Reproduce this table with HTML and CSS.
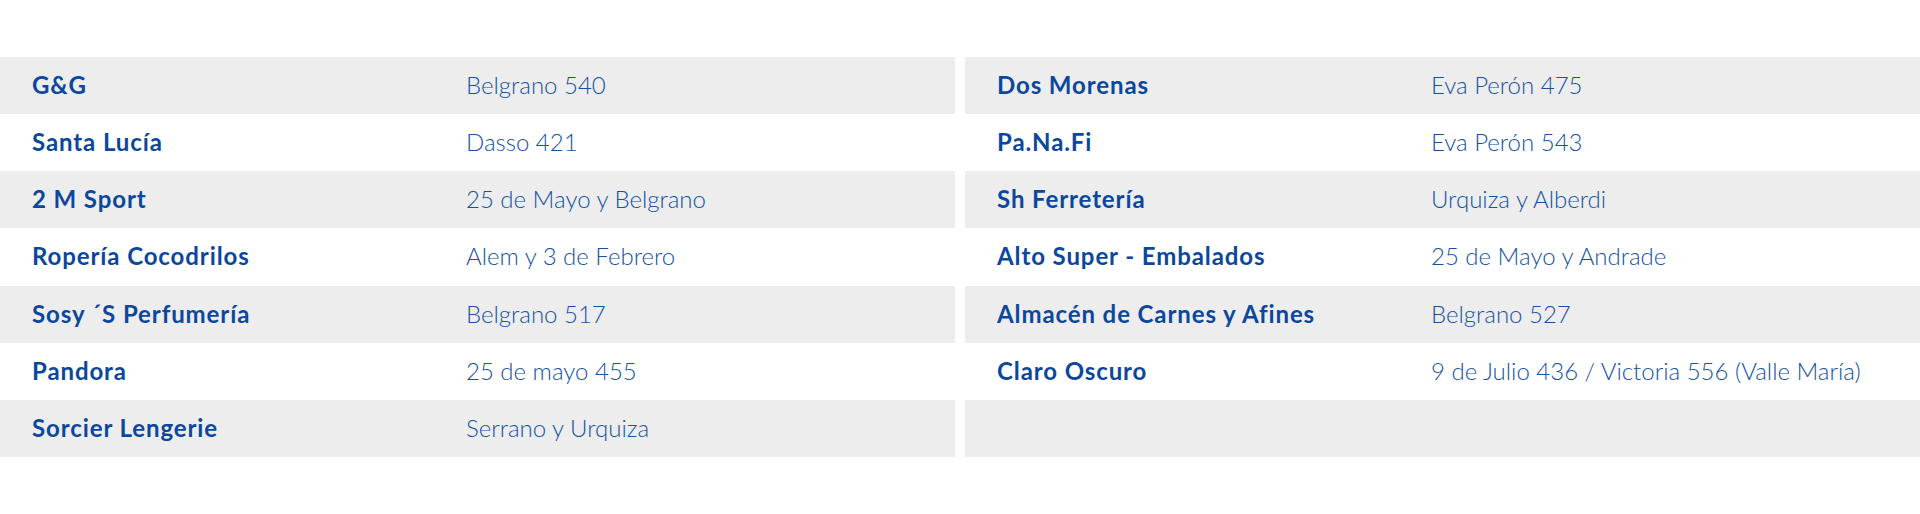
FILE: index.html
```html
<!DOCTYPE html>
<html lang="es">
<head>
<meta charset="utf-8">
<title>Comercios</title>
<link rel="stylesheet" href="styles.css">
</head>
<body>
<main class="page">
  <section class="col">
    <div class="row"><span class="name">G&amp;G</span><span class="addr">Belgrano 540</span></div>
    <div class="row"><span class="name">Santa Lucía</span><span class="addr">Dasso 421</span></div>
    <div class="row"><span class="name">2 M Sport</span><span class="addr">25 de Mayo y Belgrano</span></div>
    <div class="row"><span class="name">Ropería Cocodrilos</span><span class="addr">Alem y 3 de Febrero</span></div>
    <div class="row"><span class="name">Sosy ´S Perfumería</span><span class="addr">Belgrano 517</span></div>
    <div class="row"><span class="name">Pandora</span><span class="addr">25 de mayo 455</span></div>
    <div class="row"><span class="name">Sorcier Lengerie</span><span class="addr">Serrano y Urquiza</span></div>
  </section>
  <section class="col">
    <div class="row"><span class="name">Dos Morenas</span><span class="addr">Eva Perón 475</span></div>
    <div class="row"><span class="name">Pa.Na.Fi</span><span class="addr">Eva Perón 543</span></div>
    <div class="row"><span class="name">Sh Ferretería</span><span class="addr">Urquiza y Alberdi</span></div>
    <div class="row"><span class="name">Alto Super - Embalados</span><span class="addr">25 de Mayo y Andrade</span></div>
    <div class="row"><span class="name">Almacén de Carnes y Afines</span><span class="addr">Belgrano 527</span></div>
    <div class="row"><span class="name">Claro Oscuro</span><span class="addr">9 de Julio 436 / Victoria 556 (Valle María)</span></div>
    <div class="row"><span class="name"></span><span class="addr"></span></div>
  </section>
</main>
</body>
</html>
```
FILE: styles.css
```css
html, body {
  margin: 0;
  padding: 0;
  background: #ffffff;
}
.page {
  display: grid;
  grid-template-columns: 955px 955px;
  column-gap: 10px;
  padding-top: 57px;
  font-family: Lato, "Liberation Sans", sans-serif;
  font-size: 24px;
  color: #0d47a1;
}
.col {
  display: flex;
  flex-direction: column;
}
.row {
  display: grid;
  grid-template-columns: 434px 1fr;
  align-items: center;
  height: 57.143px;
  box-sizing: border-box;
  padding: 0 32px 2px;
}
.row:nth-child(odd) {
  background: #ededed;
}
.name {
  font-weight: 700;
  letter-spacing: 0.9px;
  color: #0b479d;
}
.addr {
  font-weight: 300;
  color: #1452a4;
}
```
